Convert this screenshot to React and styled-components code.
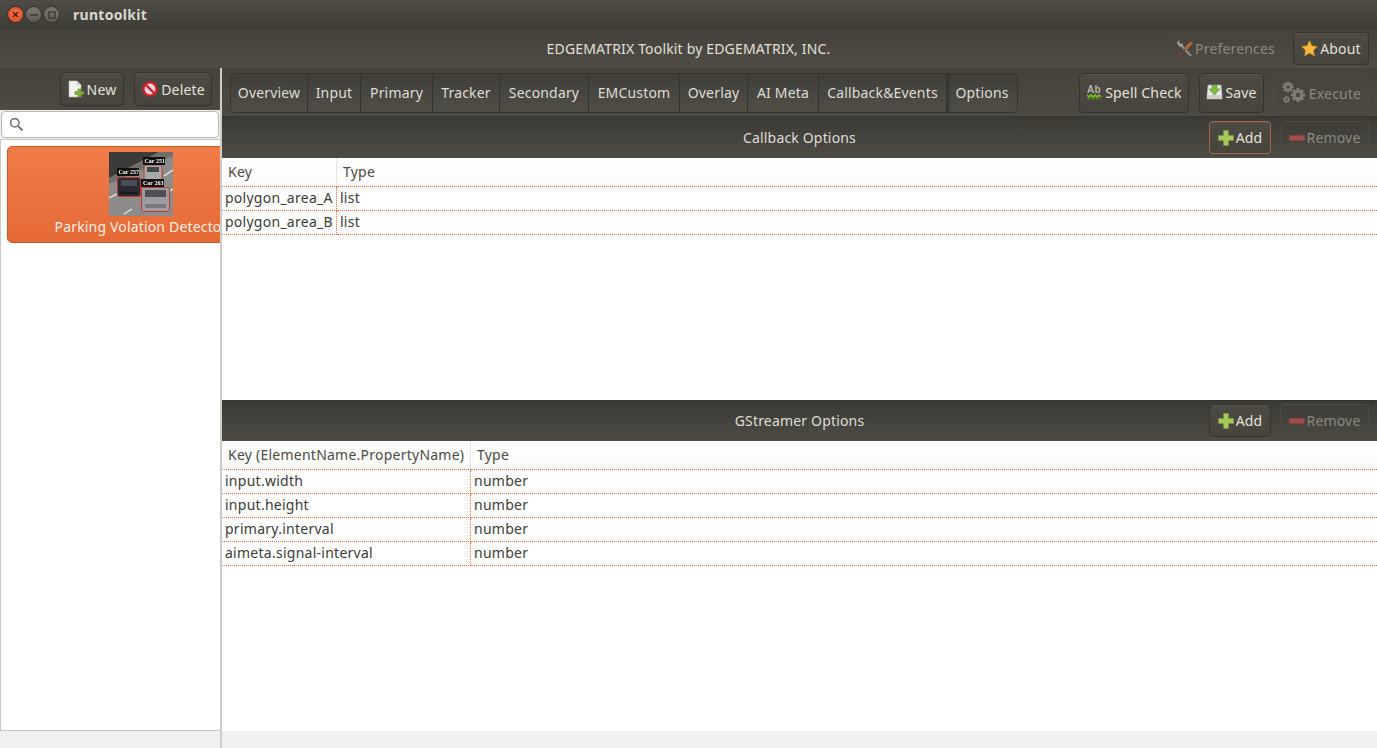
import React from 'react';
import styled, { createGlobalStyle } from 'styled-components';

const GlobalStyle = createGlobalStyle`
  html, body, #root {
    margin: 0;
    padding: 0;
    height: 100%;
    overflow: hidden;
  }
  body {
    font-family: "Noto Sans", "Open Sans", "DejaVu Sans", sans-serif;
    font-size: 14px;
    letter-spacing: 0.17px;
    color: #3c3b37;
    background: #f1f0ee;
  }
`;

const Window = styled.div`
  width: 1377px;
  height: 748px;
  display: flex;
  flex-direction: column;
  overflow: hidden;
`;

const TitleBar = styled.div`
  height: 28px;
  flex: none;
  display: flex;
  align-items: center;
  padding-left: 8px;
  background: linear-gradient(#4f4c45, #3f3d38);
`;

const WinButton = styled.div`
  width: 15px;
  height: 15px;
  margin-right: 3px;
  margin-top: 1px;
  border-radius: 50%;
  display: flex;
  align-items: center;
  justify-content: center;
  background: ${p => (p.$close ? 'radial-gradient(circle at 50% 40%, #f2764a, #d9431c)' : 'linear-gradient(#7a7870, #5d5b54)')};
  box-shadow: 0 0 0 1px #35332e;
`;

const AppName = styled.div`
  margin-left: 11px;
  font-weight: 700;
  font-size: 14px;
  letter-spacing: 0.3px;
  color: #d9d6cc;
`;

const HeaderBar = styled.div`
  height: 40px;
  flex: none;
  position: relative;
  display: flex;
  align-items: center;
  justify-content: flex-end;
  gap: 10px;
  padding-right: 8px;
  box-sizing: border-box;
  border-top: 1px solid #38362f;
  background: linear-gradient(#44423b, #4e4c45);
`;

const HeaderTitle = styled.div`
  position: absolute;
  left: 0;
  right: 0;
  top: 10px;
  text-align: center;
  font-size: 14px;
  color: #e2e0d8;
`;

const Content = styled.div`
  flex: 1;
  min-height: 0;
  display: flex;
`;

const Sidebar = styled.div`
  width: 220px;
  flex: none;
  display: flex;
  flex-direction: column;
  border-right: 2px solid #cfcdc9;
`;

const SidebarBar = styled.div`
  height: 42px;
  flex: none;
  display: flex;
  align-items: center;
  justify-content: flex-end;
  gap: 10px;
  padding-right: 8px;
  box-sizing: border-box;
  background: linear-gradient(#45433c, #4b4942);
`;

const Button = styled.div`
  height: ${p => p.$h || 33}px;
  width: ${p => p.$w}px;
  flex: none;
  box-sizing: border-box;
  padding-bottom: ${p => p.$pb || 0}px;
  display: flex;
  align-items: center;
  justify-content: center;
  gap: 2px;
  font-size: 14px;
  border-radius: 4px;
  white-space: nowrap;
  border: 1px solid ${p => (p.$focus ? '#a5674a' : p.$off ? '#4c4a43' : '#35332e')};
  color: ${p => (p.$off ? '#8b8980' : '#e4e2da')};
  background: ${p => (p.$off ? 'transparent' : 'linear-gradient(#4c4a43, #46443d)')};
  box-shadow: ${p => (p.$off ? 'none' : 'inset 0 1px 0 rgba(255,255,255,0.05)')};
`;

const SearchRow = styled.div`
  height: 30px;
  flex: none;
  background: #f1f0ee;
  padding: 1px 1px 0 1px;
  box-sizing: border-box;
  border-bottom: 1px solid #c9c7c2;
`;

const SearchBox = styled.div`
  height: 27px;
  box-sizing: border-box;
  background: #fff;
  border: 1px solid #b9b7b1;
  border-radius: 4px;
  display: flex;
  align-items: center;
  padding-left: 7px;
`;

const AppList = styled.div`
  flex: 1;
  min-height: 0;
  background: #fff;
  padding: 6px 0 0 6px;
  overflow: hidden;
  border-left: 1px solid #c9c7c2;
  border-bottom: 1px solid #c9c7c2;
`;

const AppCard = styled.div`
  width: 268px;
  height: 97px;
  box-sizing: border-box;
  border-radius: 5px;
  border: 1px solid #c9582a;
  background: linear-gradient(#f07c48, #e56a36);
  padding-top: 5px;
  display: flex;
  flex-direction: column;
  align-items: center;
  color: #fff;
`;

const CardLabel = styled.div`
  margin-top: 1px;
  white-space: nowrap;
  font-size: 14px;
  line-height: 20px;
  color: #fdeee6;
`;

const SidebarBottom = styled.div`
  height: 17px;
  flex: none;
  background: #f1f0ee;
`;

const Main = styled.div`
  flex: 1;
  min-width: 0;
  display: flex;
  flex-direction: column;
`;

const MainBar = styled.div`
  height: 48px;
  flex: none;
  display: flex;
  align-items: flex-start;
  padding: 5px 8px 0 8px;
  box-sizing: border-box;
  background: linear-gradient(#45433c, #4b4942);
`;

const Tabs = styled.div`
  height: 40px;
  display: flex;
  box-sizing: border-box;
  border: 1px solid #35332e;
  border-radius: 5px;
  overflow: hidden;
`;

const Tab = styled.div`
  width: ${p => p.$w}px;
  flex: none;
  box-sizing: border-box;
  padding-bottom: 2px;
  display: flex;
  align-items: center;
  justify-content: center;
  white-space: nowrap;
  font-size: 14px;
  color: #dfddd4;
  border-right: ${p => (p.$last ? 'none' : '1px solid #35332e')};
  background: linear-gradient(#403e39, #504e47);
  box-shadow: ${p => (p.$active ? 'inset 3px 0 3px -1px #35332e' : 'none')};
`;

const BarActions = styled.div`
  margin-left: auto;
  display: flex;
  align-items: center;
  gap: 10px;
`;

const SectionHeader = styled.div`
  height: ${p => p.$h}px;
  flex: none;
  position: relative;
  display: flex;
  align-items: center;
  justify-content: flex-end;
  gap: 9px;
  padding: 0 8px ${p => p.$pb || 0}px 0;
  box-sizing: border-box;
  border-top: 1px solid #35332e;
  background: linear-gradient(#3c3a35, #4d4b44);
`;

const SectionTitle = styled.div`
  position: absolute;
  left: 0;
  right: 0;
  top: ${p => p.$top}px;
  text-align: center;
  font-size: 14px;
  color: #dfddd4;
`;

const TableWrap = styled.div`
  flex: ${p => (p.$grow ? 1 : 'none')};
  height: ${p => (p.$grow ? 'auto' : `${p.$h}px`)};
  min-height: 0;
  background: #fff;
`;

const Grid = styled.div`
  display: grid;
  grid-template-columns: ${p => p.$key}px 1fr;
`;

const HeadCell = styled.div`
  height: 29px;
  box-sizing: border-box;
  padding: 0 0 2px 6px;
  display: flex;
  align-items: center;
  font-size: 14px;
  letter-spacing: 0.24px;
  color: #4c4b46;
  background: linear-gradient(#ffffff, #fbfbfa);
  border-right: ${p => (p.$first ? '1px solid #e6e5e2' : 'none')};
  border-bottom: 1px dotted #df6f45;
`;

const Cell = styled.div`
  height: 24px;
  box-sizing: border-box;
  padding: 0 0 2px 3px;
  display: flex;
  align-items: center;
  font-size: 14px;
  letter-spacing: 0.26px;
  color: #3c3b37;
  border-bottom: 1px dotted #df6f45;
  border-right: ${p => (p.$first ? '1px dotted #df6f45' : 'none')};
`;

const MainBottom = styled.div`
  height: 17px;
  flex: none;
  background: #f1f0ee;
`;

const NewIcon = () => (
  <svg width="17" height="18" viewBox="0 0 17 18">
    <path d="M1 1h8l4 4v12H1z" fill="#f3f2ee" stroke="#bdbcb6" strokeWidth="0.6" />
    <path d="M9 1v4h4z" fill="#cfcec8" />
    <path d="M10 9h3v2.5h3v3h-3V17h-3v-2.5H7v-3h3z" fill="#7fb13a" stroke="#4d7a1c" strokeWidth="0.5" />
  </svg>
);

const DeleteIcon = () => (
  <svg width="18" height="18" viewBox="0 0 18 18">
    <circle cx="9" cy="9" r="6.6" fill="#f0d0d0" stroke="#c8242c" strokeWidth="2.4" />
    <path d="M4.5 4.5l9 9" stroke="#c8242c" strokeWidth="2.4" />
  </svg>
);

// wrench under a screwdriver, both dimmed because the button is disabled
const ToolsIcon = () => (
  <svg width="17" height="18" viewBox="0 0 17 18">
    <path d="M4 4l11 12" stroke="#8f8d85" strokeWidth="2.2" />
    <path d="M1 3.5a3.2 3.2 0 0 1 3-3l-1 2.2 1.6 1.6L7 3.4a3.2 3.2 0 0 1-3.2 3.4z" fill="#a5a39b" />
    <path d="M15.5 2.5L9.5 9" stroke="#b8693a" strokeWidth="3" />
    <path d="M9.5 9L2 16.5" stroke="#7c3f35" strokeWidth="1.6" />
  </svg>
);

const StarIcon = () => (
  <svg width="17" height="17" viewBox="0 0 17 17">
    <path d="M8.5.8l2.4 5 5.4.7-3.9 3.8 1 5.4-4.9-2.6-4.9 2.6 1-5.4L.7 6.5l5.4-.7z" fill="#f5b83c" stroke="#d98c1c" strokeWidth="0.7" />
  </svg>
);

const SpellIcon = () => (
  <svg width="17" height="17" viewBox="0 0 17 17">
    <text x="1" y="9" fontSize="10" fontWeight="700" fontFamily="Liberation Sans, sans-serif" fill="#b4b2aa">Ab</text>
    <path d="M1 11l2 2 2-2 2 2 2-2 2 2 2-2 2 2" fill="none" stroke="#7dc11f" strokeWidth="1.6" />
    <path d="M1 13.5l2 2 2-2 2 2 2-2 2 2 2-2 2 2" fill="none" stroke="#5d9a14" strokeWidth="1" />
  </svg>
);

const SaveIcon = () => (
  <svg width="17" height="18" viewBox="0 0 17 18">
    <path d="M2 2h13l1 10v4H1v-4z" fill="#e9e8e3" stroke="#a9a8a1" strokeWidth="0.6" />
    <path d="M1 12h15v4H1z" fill="#cfcec8" />
    <path d="M6 2h5v4h3l-5.5 6L3 6h3z" fill="#7dbb45" stroke="#4f8a1e" strokeWidth="0.5" />
  </svg>
);

const Gear = ({ x, y, r }) => (
  <g transform={`translate(${x} ${y})`}>
    {[0, 45, 90, 135].map(a => (
      <rect key={a} x={-r * 0.22} y={-r} width={r * 0.44} height={r * 2} fill="#7e7c74" transform={`rotate(${a})`} />
    ))}
    <circle r={r * 0.75} fill="#7e7c74" />
    <circle r={r * 0.33} fill="#4b4942" />
  </g>
);

const ExecuteIcon = () => (
  <svg width="25" height="24" viewBox="0 0 25 24">
    <Gear x={6} y={6} r={5.5} />
    <Gear x={16} y={14} r={7} />
    <Gear x={4.5} y={18.5} r={3.5} />
  </svg>
);

const PlusIcon = () => (
  <svg width="16" height="16" viewBox="0 0 16 16">
    <path d="M5.5.5h5v5h5v5h-5v5h-5v-5h-5v-5h5z" fill="#a4c95a" stroke="#7a9c3a" strokeWidth="0.6" />
  </svg>
);

const MinusIcon = () => (
  <svg width="16" height="16" viewBox="0 0 16 16">
    <rect x="0.5" y="5.5" width="15" height="5" fill="#a44c4c" stroke="#8c4040" strokeWidth="0.6" />
  </svg>
);

const SearchIcon = () => (
  <svg width="15" height="15" viewBox="0 0 15 15">
    <circle cx="5.8" cy="5.8" r="4.2" fill="none" stroke="#77766f" strokeWidth="1.6" />
    <path d="M9 9l4.5 4.5" stroke="#77766f" strokeWidth="2" />
  </svg>
);

const ThumbSvg = styled.svg`
  flex: none;
  filter: blur(0.35px);
`;

const CarLabel = styled.text`
  font-family: "Liberation Serif", serif;
  font-size: 6px;
  font-weight: 700;
  letter-spacing: 0;
  fill: #fff;
`;

const Thumbnail = () => (
  <ThumbSvg width="64" height="64" viewBox="0 0 64 64">
    <rect width="64" height="64" fill="#8c8c8a" />
    <path d="M0 0h50L0 26z" fill="#3b3b39" />
    <path d="M50 0h14v4L0 32V26z" fill="#6f6f6c" />
    <path d="M0 46l10-5M15 62l8-5M55 24l9-6M56 42l8-5" stroke="#ecece9" strokeWidth="1.3" />
    <rect x="35" y="13" width="18" height="16" rx="2" fill="#a8a9ab" stroke="#c8352c" />
    <rect x="38" y="15" width="12" height="5" fill="#45464a" />
    <rect x="8.5" y="25.5" width="23" height="19" rx="2" fill="#2a2b30" stroke="#c8352c" />
    <rect x="12" y="28" width="16" height="6" fill="#4b4d54" />
    <rect x="12" y="40" width="16" height="2" fill="#17181b" />
    <rect x="32.5" y="35.5" width="28" height="24" rx="2" fill="#9a9ca2" stroke="#c8352c" />
    <rect x="36" y="38" width="21" height="7" fill="#4f5055" />
    <rect x="36" y="52" width="21" height="4" fill="#77797e" />
    <rect x="34" y="5" width="22" height="8" fill="#111" />
    <CarLabel x="35.5" y="11">Car 251</CarLabel>
    <rect x="8" y="16" width="22" height="8" fill="#111" />
    <CarLabel x="9.5" y="22">Car 257</CarLabel>
    <rect x="32" y="27" width="23" height="8" fill="#111" />
    <CarLabel x="34" y="33">Car 263</CarLabel>
  </ThumbSvg>
);

const tabs = [
  ['Overview', 77], ['Input', 53], ['Primary', 72], ['Tracker', 67], ['Secondary', 89],
  ['EMCustom', 91], ['Overlay', 68], ['AI Meta', 71], ['Callback&Events', 128], ['Options', 70],
];
const callbackRows = [['polygon_area_A', 'list'], ['polygon_area_B', 'list']];
const gstreamerRows = [
  ['input.width', 'number'],
  ['input.height', 'number'],
  ['primary.interval', 'number'],
  ['aimeta.signal-interval', 'number'],
];

const AddRemove = ({ focus }) => (
  <>
    <Button $w={62} $focus={focus}><PlusIcon />Add</Button>
    <Button $w={89} $off><MinusIcon />Remove</Button>
  </>
);

const OptionTable = ({ keyWidth, keyLabel, rows }) => (
  <Grid $key={keyWidth}>
    <HeadCell $first>{keyLabel}</HeadCell>
    <HeadCell>Type</HeadCell>
    {rows.map(([k, t]) => (
      <React.Fragment key={k}>
        <Cell $first>{k}</Cell>
        <Cell>{t}</Cell>
      </React.Fragment>
    ))}
  </Grid>
);

const App = () => (
  <Window>
    <GlobalStyle />
    <TitleBar>
      <WinButton $close>
        <svg width="7" height="7" viewBox="0 0 7 7"><path d="M1 1l5 5M6 1L1 6" stroke="#4a1a08" strokeWidth="1.3" /></svg>
      </WinButton>
      <WinButton>
        <svg width="8" height="2" viewBox="0 0 8 2"><path d="M0 1h8" stroke="#33312c" strokeWidth="1.3" /></svg>
      </WinButton>
      <WinButton>
        <svg width="8" height="8" viewBox="0 0 8 8"><rect x="1" y="1" width="6" height="6" fill="none" stroke="#33312c" strokeWidth="1.2" /></svg>
      </WinButton>
      <AppName>runtoolkit</AppName>
    </TitleBar>
    <HeaderBar>
      <HeaderTitle>EDGEMATRIX Toolkit by EDGEMATRIX, INC.</HeaderTitle>
      <Button $w={115} $off><ToolsIcon />Preferences</Button>
      <Button $w={76}><StarIcon />About</Button>
    </HeaderBar>
    <Content>
      <Sidebar>
        <SidebarBar>
          <Button $w={64} $h={34}><NewIcon />New</Button>
          <Button $w={78} $h={34}><DeleteIcon />Delete</Button>
        </SidebarBar>
        <SearchRow>
          <SearchBox><SearchIcon /></SearchBox>
        </SearchRow>
        <AppList>
          <AppCard>
            <Thumbnail />
            <CardLabel>Parking Volation Detector</CardLabel>
          </AppCard>
        </AppList>
        <SidebarBottom />
      </Sidebar>
      <Main>
        <MainBar>
          <Tabs>
            {tabs.map(([t, w], i) => (
              <Tab key={t} $w={w} $active={t === 'Options'} $last={i === tabs.length - 1}>{t}</Tab>
            ))}
          </Tabs>
          <BarActions>
            <Button $w={110} $h={40} $pb={2}><SpellIcon />Spell Check</Button>
            <Button $w={65} $h={40} $pb={2}><SaveIcon />Save</Button>
            <Button $w={95} $h={40} $off><ExecuteIcon />Execute</Button>
          </BarActions>
        </MainBar>
        <SectionHeader $h={42}>
          <SectionTitle $top={11}>Callback Options</SectionTitle>
          <AddRemove focus />
        </SectionHeader>
        <TableWrap $h={242}>
          <OptionTable keyWidth={115} keyLabel="Key" rows={callbackRows} />
        </TableWrap>
        <SectionHeader $h={41} $pb={1}>
          <SectionTitle $top={10}>GStreamer Options</SectionTitle>
          <AddRemove />
        </SectionHeader>
        <TableWrap $grow>
          <OptionTable keyWidth={249} keyLabel="Key (ElementName.PropertyName)" rows={gstreamerRows} />
        </TableWrap>
        <MainBottom />
      </Main>
    </Content>
  </Window>
);

export default App;
